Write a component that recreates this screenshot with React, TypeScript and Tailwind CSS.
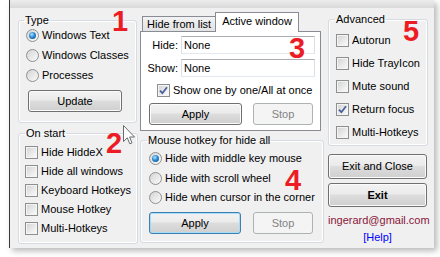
import React from "react";

const btn =
  "flex items-center justify-center rounded-[3px] border border-[#707070] bg-[linear-gradient(#f2f2f2,#ebebeb_45%,#dddddd_50%,#cfcfcf)] shadow-[inset_0_0_0_1px_#fbfbfb] text-black";
const btnFocus =
  "flex items-center justify-center rounded-[3px] border border-[#3c7fb1] bg-[linear-gradient(#f2f2f2,#ebebeb_45%,#dddddd_50%,#cfcfcf)] shadow-[inset_0_0_0_1px_#a8dcf6] text-black";
const btnDisabled =
  "flex items-center justify-center rounded-[3px] border border-[#adb2b5] bg-[#f4f4f4] text-[#838383]";
const group = "rounded-[3px] border border-[#d5dbe0] shadow-[inset_0_0_0_1px_#ffffff]";

function Radio({ label, checked }: { label: string; checked?: boolean }) {
  return (
    <div className="flex items-center gap-[3px] h-[13px]">
      <span className="w-[13px] h-[13px] rounded-full border border-[#8e8f8f] bg-[linear-gradient(135deg,#d4d4d4,#fbfbfb)] flex items-center justify-center">
        {checked && (
          <span className="w-[7px] h-[7px] rounded-full bg-[radial-gradient(circle_at_40%_35%,#b6e6ff,#2a8ad4_45%,#0d4a86)]" />
        )}
      </span>
      <span className="whitespace-nowrap">{label}</span>
    </div>
  );
}

function Check({ label, checked }: { label: string; checked?: boolean }) {
  return (
    <div className="flex items-center gap-[3px] h-[13px]">
      <span className="w-[13px] h-[13px] border border-[#8e8f8f] bg-[linear-gradient(135deg,#d2d2d2,#fdfdfd)] shadow-[inset_0_0_0_1px_#f4f4f4] flex items-center justify-center">
        {checked && (
          <svg width="9" height="9" viewBox="0 0 9 9">
            <path d="M1 4.6 L3.4 7.2 L8 1.2" stroke="#4a5f9c" strokeWidth="1.8" fill="none" />
          </svg>
        )}
      </span>
      <span className="whitespace-nowrap">{label}</span>
    </div>
  );
}

function Num({ n, className }: { n: string; className: string }) {
  return (
    <span className={`absolute text-[29px] leading-[21px] font-bold text-[#ec1c24] ${className}`}>{n}</span>
  );
}

export default function App() {
  return (
    <div className="relative w-[440px] h-[257px] bg-white overflow-hidden font-['Liberation_Sans',Arial,sans-serif] text-[11px] leading-[13px] text-black">
      <div className="ml-[9px] w-[425px] h-[248px] bg-[#f0f0f0] border-l border-[#3a3a3a] shadow-[3px_3px_6px_rgba(0,0,0,0.28)] flex flex-col">
        {/* strip left over from the title bar */}
        <div className="h-[8px] bg-[linear-gradient(#ececec,#d9d9d9)]" />

        <div className="flex pl-[8px] gap-[7px]">
          {/* left column */}
          <div className="w-[115px] mt-[6px] flex flex-col gap-[4px]">
            <fieldset className={`${group} h-[109px] px-[7px]`}>
              <legend className="ml-[-2px] px-[1px]">Type</legend>
              <div className="flex flex-col gap-[7px] pt-[2px]">
                <Radio label="Windows Text" checked />
                <Radio label="Windows Classes" />
                <Radio label="Processes" />
              </div>
              <button className={`${btn} w-[94px] h-[22px] mt-[8px] ml-[2px]`}>Update</button>
            </fieldset>

            <fieldset className={`${group} h-[117px] px-[6px]`}>
              <legend className="ml-[0px] px-[1px]">On start</legend>
              <div className="flex flex-col gap-[6px] pt-[6px]">
                <Check label="Hide HiddeX" />
                <Check label="Hide all windows" />
                <Check label="Keyboard Hotkeys" />
                <Check label="Mouse Hotkey" />
                <Check label="Multi-Hotkeys" />
              </div>
            </fieldset>
          </div>

          {/* middle column */}
          <div className="w-[181px] mt-[4px] flex flex-col">
            <div className="flex items-end h-[19px] pl-[2px] relative z-10">
              <div className="h-[15px] px-[4px] border border-b-0 border-[#898c95] bg-[linear-gradient(#f3f3f3,#e3e3e3)] leading-[14px] whitespace-nowrap">
                Hide from list
              </div>
              <div className="h-[20px] -ml-px -mb-px px-[6px] border border-b-0 border-[#898c95] bg-white leading-[16px] whitespace-nowrap">
                Active window
              </div>
            </div>
            <div className="h-[100px] border border-[#898c95] bg-white pt-[4px]">
              <div className="flex items-center gap-[3px]">
                <span className="w-[37px] text-right">Hide:</span>
                <div className="w-[134px] h-[18px] border border-[#abadb3] border-l-[#dbdfe6] border-r-[#dbdfe6] border-b-[#e3e9ef] bg-white pl-[2px] leading-[16px]">
                  None
                </div>
              </div>
              <div className="flex items-center gap-[3px] mt-[5px]">
                <span className="w-[37px] text-right">Show:</span>
                <div className="w-[134px] h-[18px] border border-[#abadb3] border-l-[#dbdfe6] border-r-[#dbdfe6] border-b-[#e3e9ef] bg-white pl-[2px] leading-[16px]">
                  None
                </div>
              </div>
              <div className="ml-[16px] mt-[7px]">
                <Check label="Show one by one/All at once" checked />
              </div>
              <div className="flex gap-[11px] ml-[8px] mt-[6px]">
                <button className={`${btn} w-[93px] h-[22px]`}>Apply</button>
                <button className={`${btnDisabled} w-[60px] h-[22px]`}>Stop</button>
              </div>
            </div>

            <fieldset className={`${group} h-[109px] mt-[3px] px-[8px]`}>
              <legend className="ml-[-2px] px-[1px]">Mouse hotkey for hide all</legend>
              <div className="flex flex-col gap-[6.5px] pt-[5px]">
                <Radio label="Hide with middle key mouse" checked />
                <Radio label="Hide with scroll wheel" />
                <Radio label="Hide when cursor in the corner" />
              </div>
              <div className="flex gap-[12px] mt-[8px]">
                <button className={`${btnFocus} w-[92px] h-[22px]`}>Apply</button>
                <button className={`${btnDisabled} w-[60px] h-[22px]`}>Stop</button>
              </div>
            </fieldset>
          </div>

          {/* right column */}
          <div className="w-[99px] mt-[5px] flex flex-col">
            <fieldset className={`${group} h-[133px] px-[7px]`}>
              <legend className="ml-[-1px] px-[1px]">Advanced</legend>
              <div className="flex flex-col gap-[10px] pt-[8px]">
                <Check label="Autorun" />
                <Check label="Hide TrayIcon" />
                <Check label="Mute sound" />
                <Check label="Return focus" checked />
                <Check label="Multi-Hotkeys" />
              </div>
            </fieldset>
            <button className={`${btn} w-[99px] h-[25px] mt-[8px]`}>Exit and Close</button>
            <button className={`${btn} w-[99px] h-[24px] mt-[4px] font-bold`}>Exit</button>
            <div className="mt-[7px] text-center text-[#8a1538]">ingerard@gmail.com</div>
            <div className="mt-[4px] text-center text-[#0000ff]">[Help]</div>
          </div>
        </div>
      </div>

      {/* annotation overlays */}
      <Num n="1" className="left-[112px] top-[11px]" />
      <Num n="2" className="left-[106px] top-[133px]" />
      <Num n="3" className="left-[289px] top-[38px]" />
      <Num n="4" className="left-[285px] top-[170px]" />
      <Num n="5" className="left-[403px] top-[21px]" />
      <svg className="absolute left-[123px] top-[125px]" width="13" height="21" viewBox="0 0 13 21">
        <path d="M0.5 0.5 L0.5 16.5 L4.3 12.8 L6.8 18.8 L9 17.9 L6.6 12 L11.5 12 Z" fill="#ffffff" stroke="#6b6b6b" strokeWidth="1" />
      </svg>
    </div>
  );
}
